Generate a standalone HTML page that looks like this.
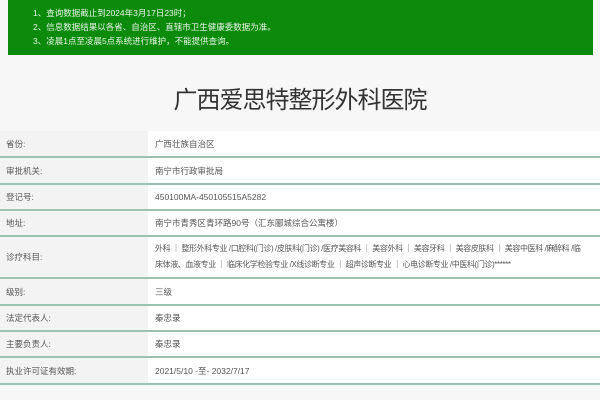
<!DOCTYPE html>
<html><head><meta charset="utf-8"><style>
*{margin:0;padding:0;box-sizing:border-box}
body{width:600px;height:400px;overflow:hidden;background:#f7f7f7;font-family:"Liberation Sans","Noto Sans CJK SC",sans-serif;color:#444;position:relative}
.ban{position:absolute;left:8px;top:0;width:585px;height:55px;background:#0b8a0b;color:#e8f5e8;font-size:8.5px;line-height:14px;padding:6px 0 0 25px}
h1{position:absolute;top:80px;left:0;width:600px;text-align:center;font-weight:normal;font-size:24px;color:#333;letter-spacing:-1px}
.tb{position:absolute;left:0;top:131px;width:600px}
.r{display:flex;border-bottom:2px solid #9cc2b2;font-size:8.5px;color:#555}
.l{width:148px;background:#f3f3f3;padding-left:6px;display:flex;align-items:center}
.v{flex:1;background:#fff;padding-left:7px;display:flex;align-items:center}
.v.m{line-height:16px;padding-right:14px;font-size:8px;letter-spacing:-0.4px}
</style></head><body>
<div class="ban">1、查询数据截止到2024年3月17日23时；<br>2、信息数据结果以各省、自治区、直辖市卫生健康委数据为准。<br>3、凌晨1点至凌晨5点系统进行维护，不能提供查询。</div>
<h1>广西爱思特整形外科医院</h1>
<div class="tb">
<div class="r" style="height:27px"><div class="l">省份:</div><div class="v">广西壮族自治区</div></div>
<div class="r" style="height:27px"><div class="l">审批机关:</div><div class="v">南宁市行政审批局</div></div>
<div class="r" style="height:26px"><div class="l">登记号:</div><div class="v">450100MA-450105515A5282</div></div>
<div class="r" style="height:26px"><div class="l">地址:</div><div class="v">南宁市青秀区青环路90号（汇东郦城综合公寓楼）</div></div>
<div class="r" style="height:42px"><div class="l">诊疗科目:</div><div class="v m">外科 ｜ 整形外科专业 /口腔科(门诊) /皮肤科(门诊) /医疗美容科 ｜ 美容外科 ｜ 美容牙科 ｜ 美容皮肤科 ｜ 美容中医科 /麻醉科 /临床体液、血液专业 ｜ 临床化学检验专业 /X线诊断专业 ｜ 超声诊断专业 ｜ 心电诊断专业 /中医科(门诊)******</div></div>
<div class="r" style="height:27px"><div class="l">级别:</div><div class="v">三级</div></div>
<div class="r" style="height:26px"><div class="l">法定代表人:</div><div class="v">秦忠录</div></div>
<div class="r" style="height:26px"><div class="l">主要负责人:</div><div class="v">秦忠录</div></div>
<div class="r" style="height:27px"><div class="l">执业许可证有效期:</div><div class="v">2021/5/10 -至- 2032/7/17</div></div>
</div>
</body></html>
